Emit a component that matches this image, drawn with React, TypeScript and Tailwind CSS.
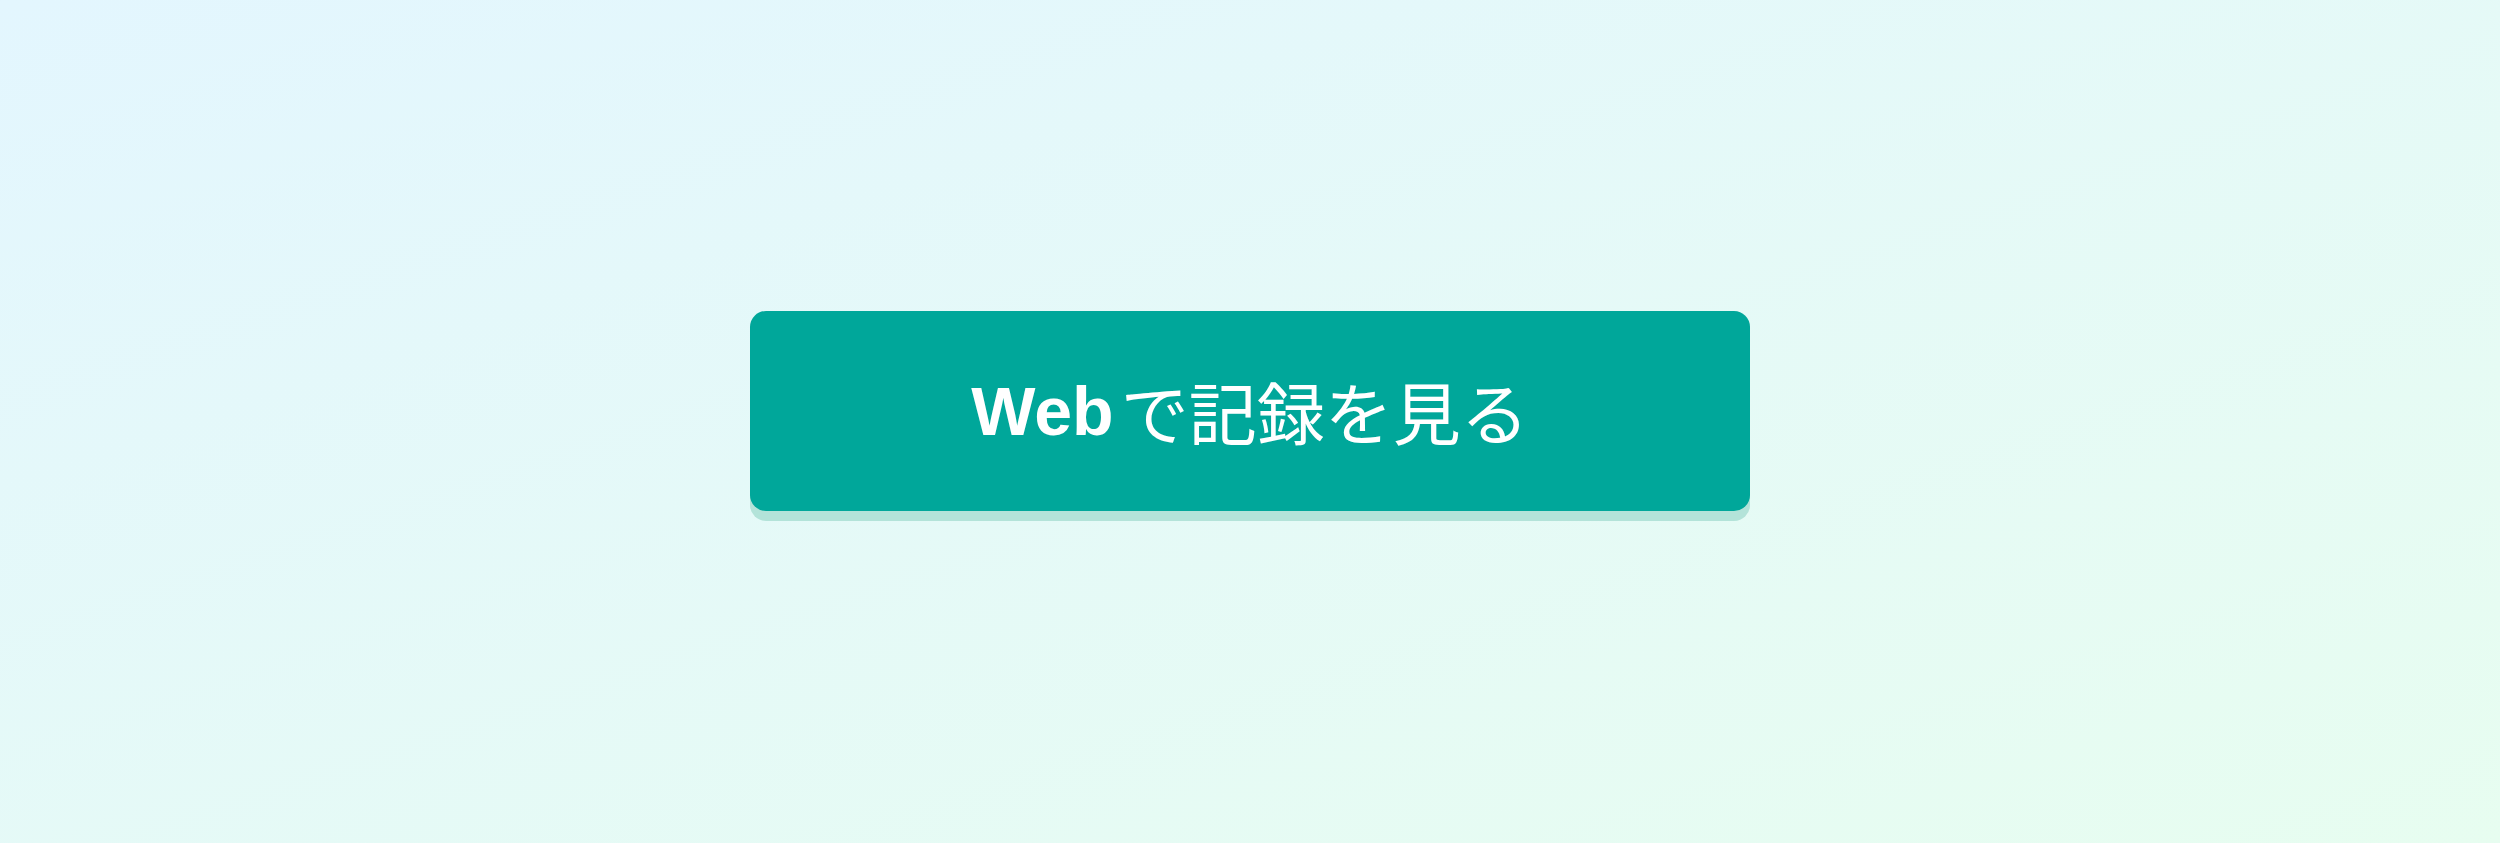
export default function App() {
  return (
    <div className="flex min-h-screen items-center justify-center bg-gradient-to-br from-[#e3f6fe] to-[#e7fdf0] pb-[21px]">
      <button
        type="button"
        className="flex h-[200px] w-[1000px] items-center justify-center gap-[7px] rounded-2xl bg-[#00a79a] text-white shadow-[0_10px_0_#b3e3d9]"
      >
        <span className="font-['Liberation_Sans',Arial,sans-serif] text-[68px] font-bold leading-none">Web</span>
        <span className="font-['Noto_Sans_CJK_JP','Noto_Sans',sans-serif] text-[68px] font-normal leading-none">
          で記録を見る
        </span>
      </button>
    </div>
  );
}
